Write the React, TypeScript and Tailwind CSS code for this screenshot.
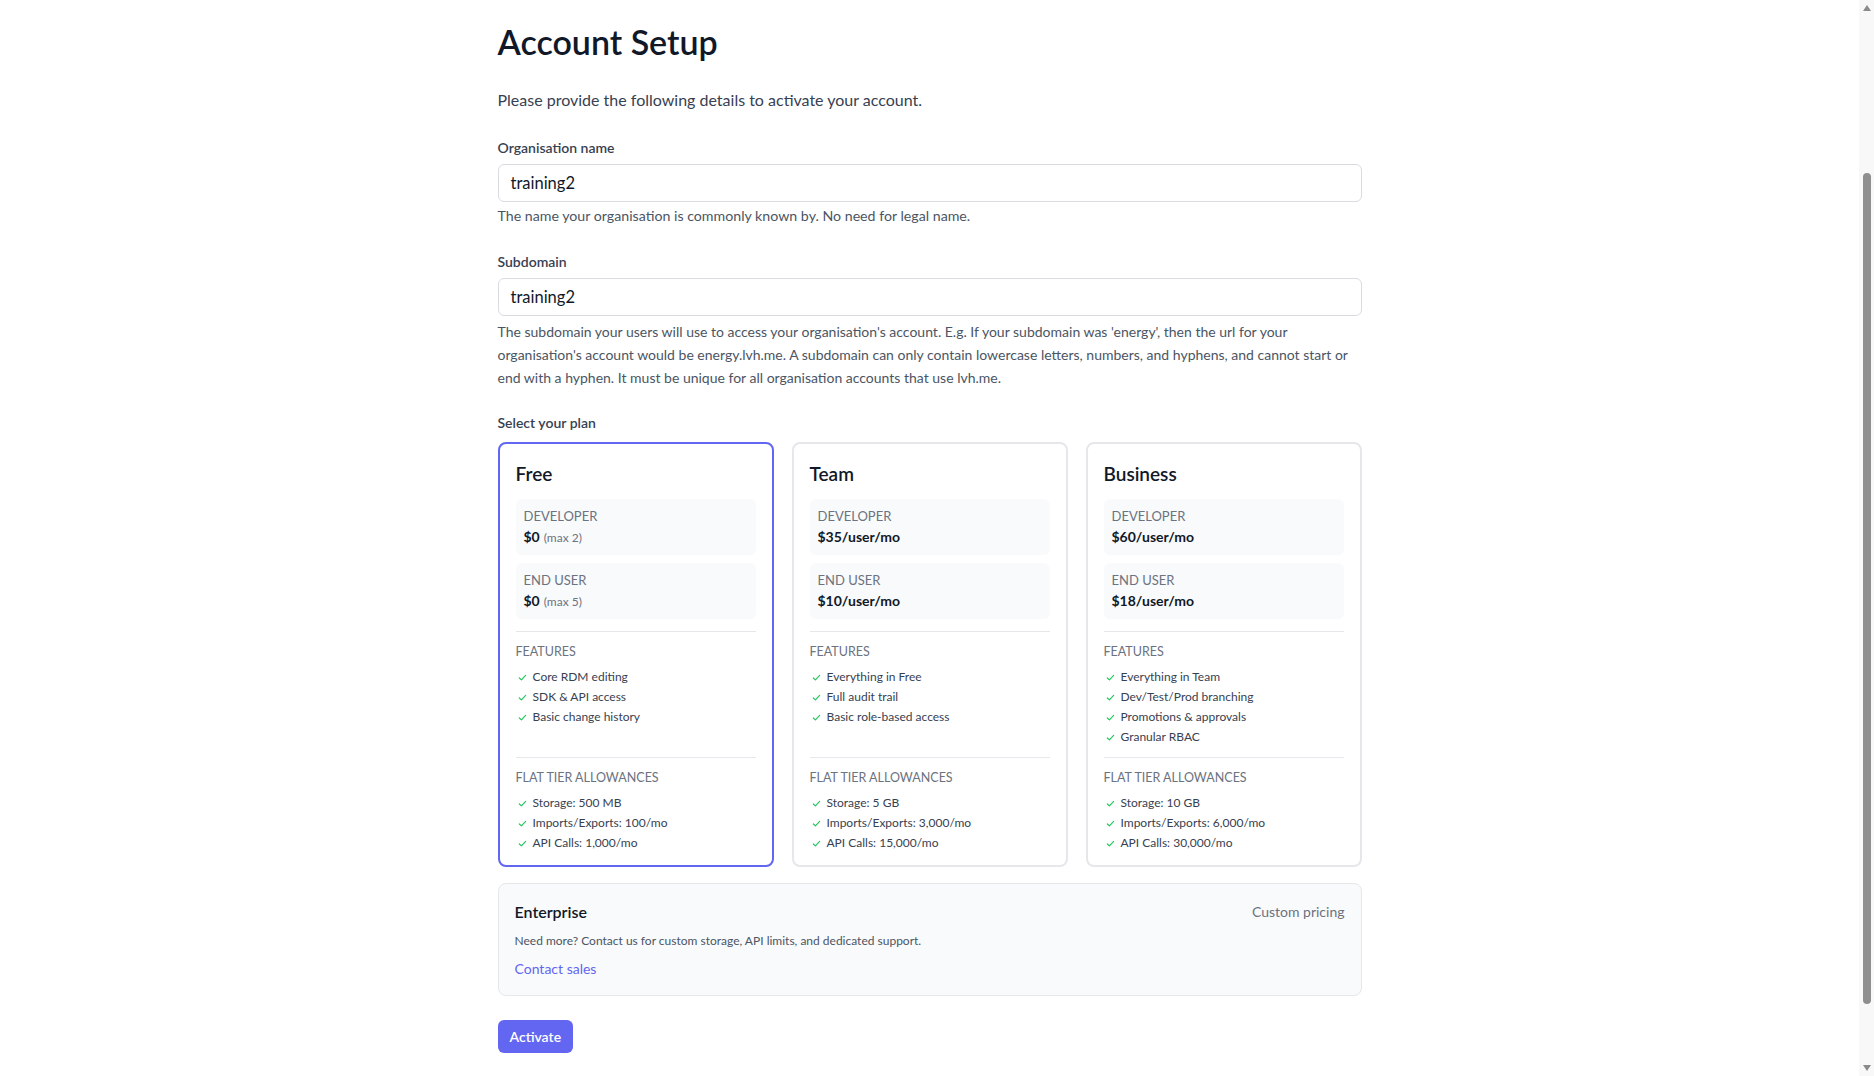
import React from 'react';

type Plan = {
  name: string;
  developer: string;
  developerNote?: string;
  endUser: string;
  endUserNote?: string;
  features: string[];
  allowances: string[];
  selected?: boolean;
};

const plans: Plan[] = [
  {
    name: 'Free',
    developer: '$0',
    developerNote: '(max 2)',
    endUser: '$0',
    endUserNote: '(max 5)',
    features: ['Core RDM editing', 'SDK & API access', 'Basic change history'],
    allowances: ['Storage: 500 MB', 'Imports/Exports: 100/mo', 'API Calls: 1,000/mo'],
    selected: true,
  },
  {
    name: 'Team',
    developer: '$35/user/mo',
    endUser: '$10/user/mo',
    features: ['Everything in Free', 'Full audit trail', 'Basic role-based access'],
    allowances: ['Storage: 5 GB', 'Imports/Exports: 3,000/mo', 'API Calls: 15,000/mo'],
  },
  {
    name: 'Business',
    developer: '$60/user/mo',
    endUser: '$18/user/mo',
    features: ['Everything in Team', 'Dev/Test/Prod branching', 'Promotions & approvals', 'Granular RBAC'],
    allowances: ['Storage: 10 GB', 'Imports/Exports: 6,000/mo', 'API Calls: 30,000/mo'],
  },
];

const Check = () => (
  <svg viewBox="0 0 10 10" className="w-[9px] h-[9px] shrink-0 text-[#22c55e]" fill="none" stroke="currentColor" strokeWidth="1.3" strokeLinecap="round" strokeLinejoin="round">
    <polyline points="1.5,5.5 3.8,7.6 8.5,2.6" />
  </svg>
);

const CheckList = ({ items }: { items: string[] }) => (
  <ul className="mt-[7px]">
    {items.map((item) => (
      <li key={item} className="flex items-center gap-[6px] pl-[2px] h-5 text-[12px] text-[#374151]">
        <Check />
        <span>{item}</span>
      </li>
    ))}
  </ul>
);

const PriceBox = ({ label, price, note }: { label: string; price: string; note?: string }) => (
  <div className="bg-[#f9fafb] rounded-md p-2">
    <div className="text-[13px] leading-[18px] uppercase text-[#6b7280]">{label}</div>
    <div className="mt-[2px] h-5 leading-5 text-[14px] font-bold text-[#111827]">
      {price}
      {note && <span className="ml-1 text-[12px] leading-none font-normal text-[#6b7280]">{note}</span>}
    </div>
  </div>
);

const PlanCard = ({ plan }: { plan: Plan }) => (
  <div
    className={`flex flex-col rounded-lg border-2 bg-white px-4 pt-4 pb-3 ${
      plan.selected ? 'border-[#6366f1]' : 'border-[#e5e7eb]'
    }`}
  >
    <h3 className="text-[19px] leading-7 font-semibold text-[#111827]">{plan.name}</h3>
    <div className="mt-[11px] flex flex-col gap-2">
      <PriceBox label="Developer" price={plan.developer} note={plan.developerNote} />
      <PriceBox label="End user" price={plan.endUser} note={plan.endUserNote} />
    </div>
    <div className="mt-3 flex-1 border-t border-[#e5e7eb] pt-3 pb-[10px]">
      <div className="text-[12.5px] leading-4 uppercase text-[#6b7280]">Features</div>
      <CheckList items={plan.features} />
    </div>
    <div className="border-t border-[#e5e7eb] pt-3">
      <div className="text-[12.5px] leading-4 uppercase text-[#6b7280]">Flat tier allowances</div>
      <CheckList items={plan.allowances} />
    </div>
  </div>
);

// browser scrollbar lookalike (page in the reference is scrolled a bit)
const ScrollBar = () => (
  <div className="fixed right-0 top-0 bottom-0 w-[15px] bg-[#f8f8f8] flex flex-col items-center">
    <svg viewBox="0 0 8 6" className="mt-[5px] w-[8px] h-[6px] text-[#8a8a8a]" fill="currentColor">
      <polygon points="4,0 8,6 0,6" />
    </svg>
    <div className="mt-[162px] h-[831px] w-[8px] rounded-full bg-[#8f8f8f]" />
    <div className="flex-1" />
    <svg viewBox="0 0 8 6" className="mb-[5px] w-[8px] h-[6px] text-[#8a8a8a]" fill="currentColor">
      <polygon points="0,0 8,0 4,6" />
    </svg>
  </div>
);

export default function App() {
  return (
    <div className="min-h-screen bg-white pr-[15px]" style={{ fontFamily: 'Lato, "Noto Sans", sans-serif' }}>
      <div className="w-[864px] mx-auto pt-5 pb-12">
        <h1 className="text-[34px] leading-[44px] font-semibold text-[#111827]">Account Setup</h1>
        <p className="mt-[24px] text-[16px] leading-6 text-[#374151]">
          Please provide the following details to activate your account.
        </p>

        <div className="mt-[26px]">
          <label className="block text-[14px] leading-5 font-semibold text-[#374151]">Organisation name</label>
          <div className="mt-[6px] h-[38px] flex items-center rounded-md border border-[#d9dbe0] px-3 text-[16.5px] text-[#111827]">
            training2
          </div>
          <p className="mt-[2px] text-[14.2px] leading-[23px] text-[#4b5563]">
            The name your organisation is commonly known by. No need for legal name.
          </p>
        </div>

        <div className="mt-[25px]">
          <label className="block text-[14px] leading-5 font-semibold text-[#374151]">Subdomain</label>
          <div className="mt-[6px] h-[38px] flex items-center rounded-md border border-[#d9dbe0] px-3 text-[16.5px] text-[#111827]">
            training2
          </div>
          <p className="mt-1 text-[14px] leading-[23px] text-[#4b5563]">
            The subdomain your users will use to access your organisation's account. E.g. If your subdomain was 'energy', then the url for your organisation's account would be energy.lvh.me. A subdomain can only contain lowercase letters, numbers, and hyphens, and cannot start or end with a hyphen. It must be unique for all organisation accounts that use lvh.me.
          </p>
        </div>

        <div className="mt-6">
          <div className="text-[14px] leading-5 font-semibold text-[#374151]">Select your plan</div>
          <div className="mt-[9px] grid grid-cols-3 gap-[18px]">
            {plans.map((plan) => (
              <PlanCard key={plan.name} plan={plan} />
            ))}
          </div>
        </div>

        <div className="mt-4 rounded-lg border border-[#e5e7eb] bg-[#f9fafb] p-4">
          <div className="flex items-center justify-between">
            <div className="text-[16px] leading-6 font-semibold text-[#111827]">Enterprise</div>
            <div className="text-[14px] leading-6 text-[#6b7280]">Custom pricing</div>
          </div>
          <p className="mt-2 text-[12px] leading-[18px] text-[#4b5563]">
            Need more? Contact us for custom storage, API limits, and dedicated support.
          </p>
          <a href="#" className="mt-[9px] block text-[14px] leading-5 text-[#6366f1]">
            Contact sales
          </a>
        </div>

        <button className="mt-6 h-[33px] rounded-md bg-[#6366f1] px-3 text-[14px] font-semibold text-white">
          Activate
        </button>
      </div>
      <ScrollBar />
    </div>
  );
}
